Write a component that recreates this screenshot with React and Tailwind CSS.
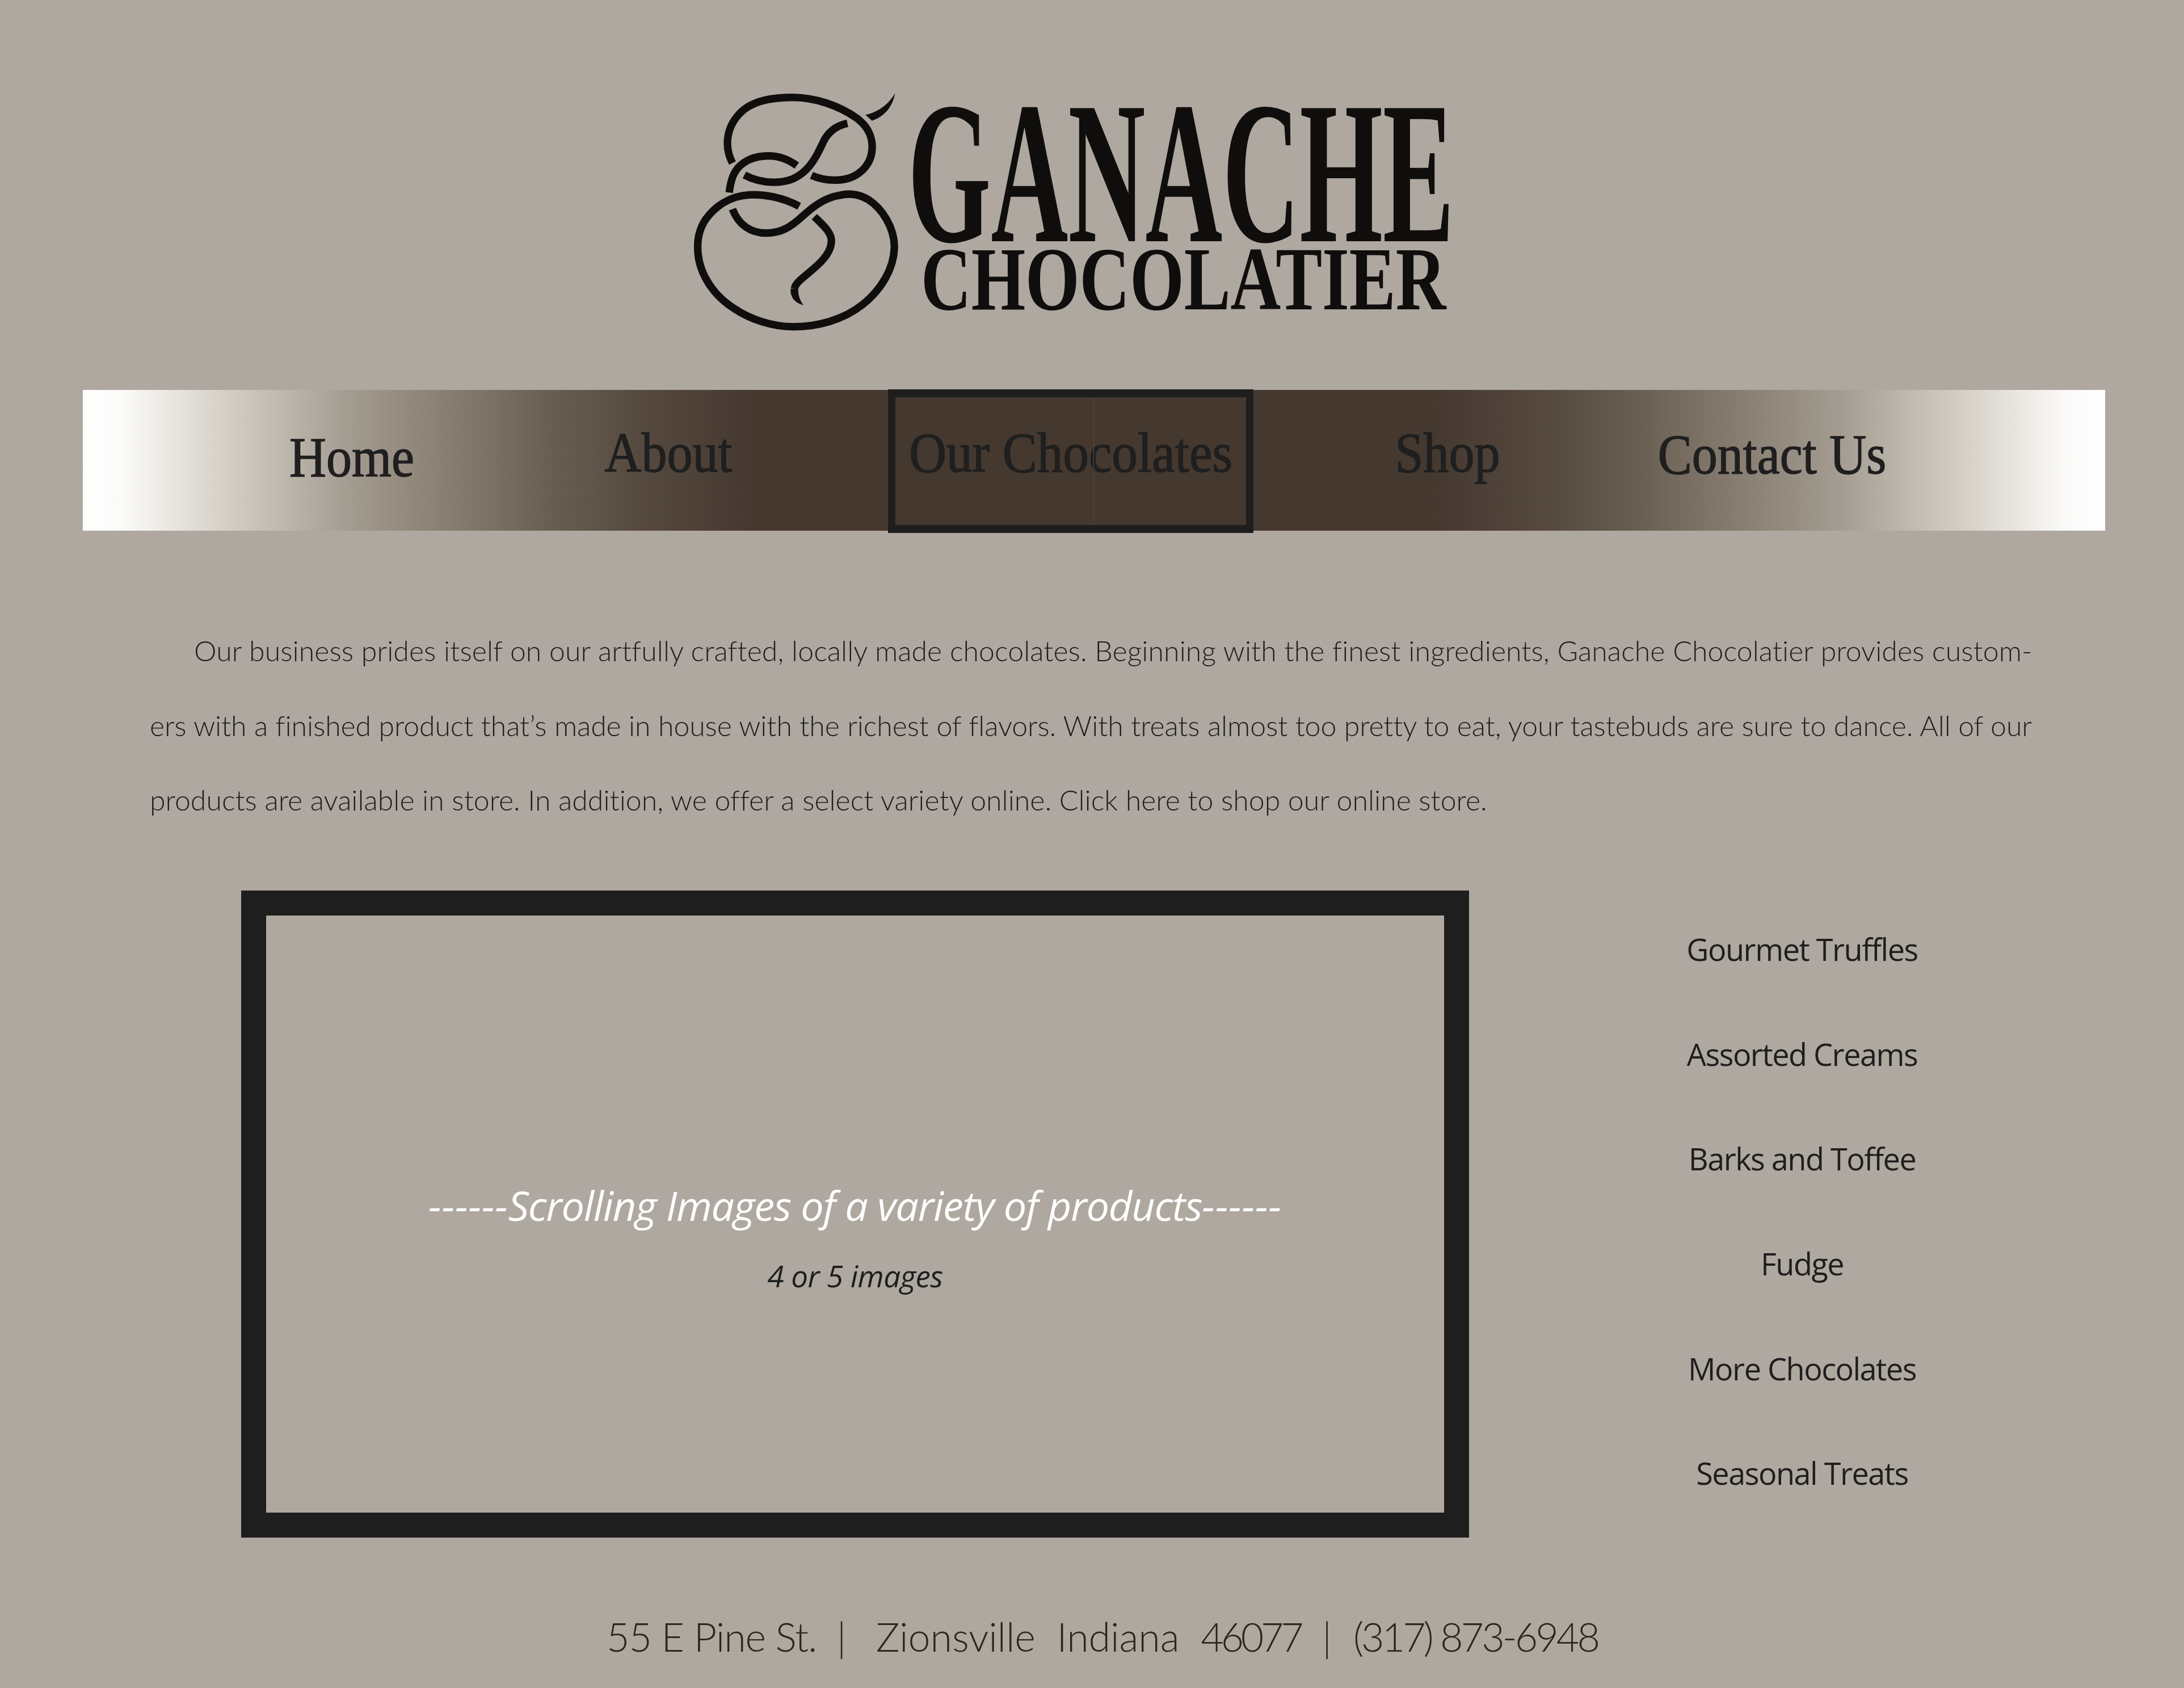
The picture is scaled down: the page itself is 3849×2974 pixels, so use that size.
// App.jsx - Ganache Chocolatier landing page
const categorias = [
  'Gourmet Truffles',
  'Assorted Creams',
  'Barks and Toffee',
  'Fudge',
  'More Chocolates',
  'Seasonal Treats',
];

function Monograma() {
  return (
    <svg viewBox="0 0 1250 1380" className="w-[417px] h-[460px] shrink-0" fill="none" stroke="#0f0e0c" strokeWidth="40" strokeLinecap="butt">
      <path d="M332 442 C290 360 295 260 370 180 C440 105 560 95 650 95 C770 95 900 140 990 205 C1050 250 1075 310 1070 370 C1065 450 1000 530 880 532 C830 533 790 525 750 507" />
      <path d="M1035 187 C1100 175 1160 130 1192 72 C1180 140 1140 195 1070 218 Z" fill="#0f0e0c" stroke="none" />
      <path d="M940 232 C880 245 835 280 810 335 C780 400 745 470 680 510 C620 550 500 560 395 505" />
      <path d="M672 455 C610 410 550 400 500 405 C420 410 360 450 335 510 C322 545 318 570 315 598" />
      <path d="M685 670 C600 625 500 605 420 610 C320 615 240 670 190 740 C150 800 145 870 150 920 C160 1030 230 1140 340 1210 C430 1270 540 1305 650 1307 C780 1308 920 1270 1020 1190 C1120 1110 1185 1000 1188 890 C1190 780 1120 680 1050 635 C1000 605 950 600 900 612 C820 625 760 670 700 725 C640 780 590 812 510 812 C430 812 365 770 332 685" />
      <path d="M765 725 C810 770 860 810 855 860 C850 930 780 985 720 1035 C690 1060 665 1080 660 1105" />
      <path d="M640 1105 C636 1150 660 1180 707 1193 C690 1170 678 1140 680 1105 Z" fill="#0f0e0c" stroke="none" />
    </svg>
  );
}

export default function App() {
  return (
    <div className="w-[3849px] h-[2974px] overflow-hidden bg-[#afa8a0] text-[#1e1e1e] font-['Lato',sans-serif]">
      {/* Logo */}
      <header className="flex items-start h-[687px] pt-[140px] pl-[1180px]">
        <Monograma />
        <div className="ml-[3px] mt-[49px] text-[#0f0e0c] font-['Liberation_Serif',serif] font-bold whitespace-nowrap">
          <div className="text-[358px] leading-[231px] h-[234px] origin-left scale-x-[0.526]">GANACHE</div>
          <div className="mt-[16px] ml-[23px] text-[159px] leading-[105px] h-[105px] origin-left scale-x-[0.772]">CHOCOLATIER</div>
        </div>
      </header>

      {/* Navegación */}
      <nav className="flex items-start ml-[146px] w-[3564px] h-[248px] bg-[linear-gradient(90deg,#ffffff_0%,#fbfaf8_2%,#d5d0c6_7%,#a59d92_13%,#887e72_18%,#6a5f53_23%,#564a40_27.5%,#44382f_33.3%,#44382f_66.7%,#564a40_72.5%,#6a5f53_77%,#887e72_82%,#a59d92_87%,#d5d0c6_93%,#fbfaf8_98%,#ffffff_100%)] font-['Liberation_Serif',serif] text-[100px] leading-[100px] text-[#1f1f1f] [-webkit-text-stroke:1.5px_#1f1f1f]">
        <a className="block w-[400px] ml-[274px] mt-[69px] text-center scale-x-[0.9]">Home</a>
        <a className="block w-[400px] ml-[158px] mt-[61px] text-center scale-x-[0.9]">About</a>
        <div className="relative w-[644px] h-[253px] ml-[187px] -mt-[1px] border-[13px] border-y-[14px] border-[#1e1e1e] pt-[48px] text-center">
          <span className="block scale-x-[0.912] -translate-x-[3px] whitespace-nowrap">Our Chocolates</span>
          <span className="absolute top-0 bottom-0 left-[349px] w-px bg-[#54473e]"></span>
        </div>
        <a className="block w-[400px] ml-[142px] mt-[61px] text-center scale-x-[0.9]">Shop</a>
        <a className="block w-[600px] ml-[72px] mt-[64px] text-center scale-x-[0.9]">Contact Us</a>
      </nav>

      {/* Texto */}
      <section className="ml-[264px] w-[3314px] mt-[146px] text-[50px] leading-[131.5px] font-light whitespace-nowrap">
        <p className="pl-[78px] tracking-[0.07px]">Our business prides itself on our artfully crafted, locally made chocolates. Beginning with the finest ingredients, Ganache Chocolatier provides custom-</p>
        <p className="tracking-[-0.09px]">ers with a finished product that’s made in house with the richest of flavors. With treats almost too pretty to eat, your tastebuds are sure to dance. All of our</p>
        <p className="tracking-[0.02px]">products are available in store. In addition, we offer a select variety online. Click here to shop our online store.</p>
      </section>

      {/* Galería y categorías */}
      <section className="flex items-start ml-[425px] mt-[93.5px]">
        <div className="w-[2164px] h-[1140px] border-[44px] border-[#1e1e1e] flex flex-col items-center font-['Open_Sans',sans-serif] italic">
          <p className="mt-[460px] text-[72px] leading-[100px] tracking-[-1.2px] text-white whitespace-nowrap">
            <span className="tracking-[0.9px]">------</span>Scrolling Images of a variety of products<span className="tracking-[0.9px]">------</span>
          </p>
          <p className="mt-[40px] text-[53px] leading-[70px] tracking-[-0.6px]">4 or 5 images</p>
        </div>
        <ul className="w-[600px] ml-[287px] pt-[68px] font-['Open_Sans',sans-serif] text-[54px] leading-[70px] tracking-[-1.5px] text-center">
          {categorias.map((categoria) => (
            <li key={categoria} className="h-[184.7px]">{categoria}</li>
          ))}
        </ul>
      </section>

      {/* Pie */}
      <footer className="mt-[93px] ml-[1069px] text-[70px] leading-[90px] font-light text-[#2d261e] whitespace-pre">
        <span className="tracking-[-1.2px]">{'55 E Pine St.  |   '}</span>
        <span className="tracking-[-0.1px]">{'Zionsville  Indiana  '}</span>
        <span className="tracking-[-5.4px]">46077</span>
        {'  |  '}
        <span className="tracking-[-4px]">(317) 873-6948</span>
      </footer>
    </div>
  );
}
